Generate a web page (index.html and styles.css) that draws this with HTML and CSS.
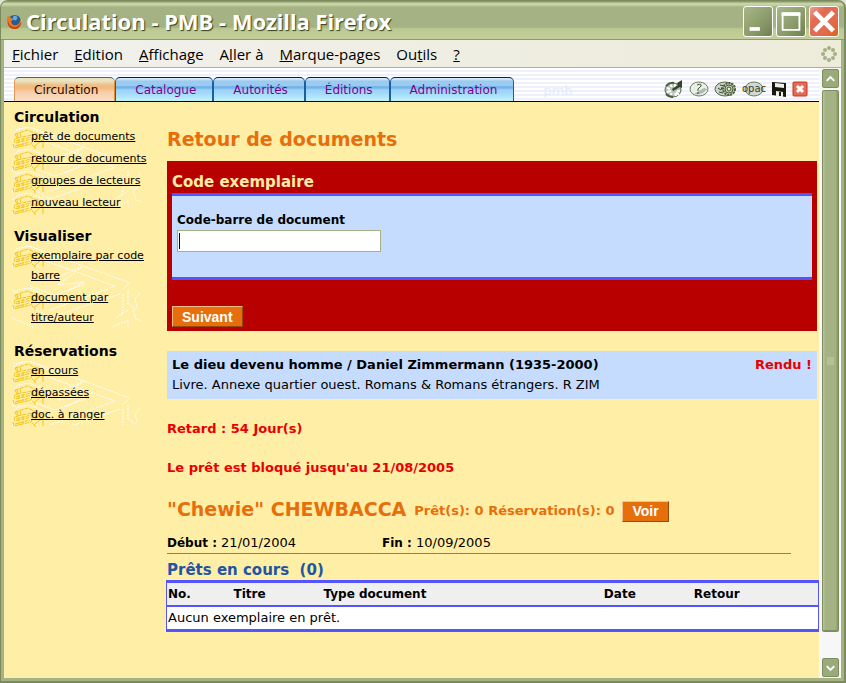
FILE: index.html
```html
<!DOCTYPE html>
<html lang="fr">
<head>
<meta charset="utf-8">
<title>Circulation - PMB</title>
<link rel="stylesheet" href="styles.css">
</head>
<body>
<svg class="defs" aria-hidden="true">
  <symbol id="books" viewBox="0 0 33 22">
    <g fill="none" stroke="#fff" stroke-dasharray="2 1"><path d="M2 6 6 2 17 0l13 5 2 4M1 12l-1 3M1 19l-1 3"/></g>
    <g fill="none" stroke="#f5c518" stroke-dasharray="4 1"><path d="M3 7 16 3l6 3M3 7l2 4 15-3M5 7l1 3M8 6l1 4M3 12l3-1M2 12l1 4 17-4 1-4M4 14l15-4M1 17l1 4 17-4 2-5M3 19l15-4M7 12v8M11 11v8"/></g>
    <g fill="none" stroke="#f5c518"><path d="M22 6l4 1-3 6M20 8l2 4M22 20l9-8v9M22 15l8-6 2 3M20 18l3 2v2"/></g>
  </symbol>
  <symbol id="sketch" viewBox="0 0 130 86">
    <g fill="none" stroke="#fff" stroke-dasharray="2 1"><path d="M4 3 17 0l101 37-8 7M31 14l72 26-65 24M31 7l12 5M43 32l27-11-24 18 26-3-18 10M18 40l25 9 30-11M0 44l6 3M38 72l70-24M0 72l22 9M21 62l17 10M116 44v14l6 4M128 47l-5 6 2 8-4 3 3 9 6 2M111 48v16l-2 6M101 81l15-7v7M116 64l-13 8"/></g>
  </symbol>
</svg>
<div class="window">
  <header class="titlebar">
    <svg class="fox" viewBox="0 0 18 18" aria-hidden="true"><circle cx="9" cy="9" r="7" fill="#245c9c"/><path d="M8 3q4-1 4 3l-2 2-3-1z" fill="#64b0dc"/><path d="M2 3C0 8 1 16 9 17c7 0 9-8 7-13 0 4-2 9-6 9-3 0-5-2-4-5l2-1C6 5 4 5 2 3z" fill="#ed791b"/><path d="M2 8c1 5 4 7 8 7 4-1 5-4 6-6 0 4-2 8-7 8-5 0-8-4-7-9z" fill="#c84112"/><path d="M15 4q2 4-1 8l3-4z" fill="#ffd14c"/></svg>
    <h1 class="window-title">Circulation - PMB - Mozilla Firefox</h1>
    <div class="window-buttons">
      <button class="wbtn" type="button" aria-label="Réduire"><svg viewBox="0 0 30 30"><path d="M6 21h11v4H6z" fill="#fff"/></svg></button>
      <button class="wbtn" type="button" aria-label="Agrandir"><svg viewBox="0 0 30 30"><path d="M6 7h18v17H6z" fill="none" stroke="#fff" stroke-width="2"/><path d="M5 7h20" stroke="#fff" stroke-width="4"/></svg></button>
      <button class="wbtn close" type="button" aria-label="Fermer"><svg viewBox="0 0 30 30"><path d="M5 5 25 25M25 5 5 25" stroke="#fff" stroke-width="5"/></svg></button>
    </div>
  </header>
  <nav class="menubar" aria-label="Menu">
    <a href="#"><u>F</u>ichier</a><a href="#"><u>E</u>dition</a><a href="#"><u>A</u>ffichage</a><a href="#">A<u>l</u>ler à</a><a href="#"><u>M</u>arque-pages</a><a href="#">Ou<u>t</u>ils</a><a href="#"><u>?</u></a>
    <svg class="throbber" viewBox="0 0 16 16" aria-hidden="true"><g fill="#a3b183"><circle cx="8" cy="2" r="2"/><circle cx="12" cy="4" r="2"/><circle cx="14" cy="8" r="2"/><circle cx="12" cy="12" r="2"/><circle cx="8" cy="14" r="2"/><circle cx="4" cy="12" r="2"/><circle cx="2" cy="8" r="2"/><circle cx="4" cy="4" r="2"/></g></svg>
  </nav>
  <div class="viewport">
    <div class="page">
      <div class="topbar">
        <nav class="tabs" aria-label="Modules">
          <a class="tab active" href="#">Circulation</a>
          <a class="tab" href="#">Catalogue</a>
          <a class="tab" href="#">Autorités</a>
          <a class="tab" href="#">Éditions</a>
          <a class="tab" href="#">Administration</a>
        </nav>
        <span class="watermark" aria-hidden="true">pmb</span>
        <div class="tools">
          <a href="#" aria-label="Tableau de bord"><svg width="20" height="18" viewBox="0 0 20 18"><ellipse cx="9" cy="10" rx="8" ry="7" fill="#b9c0b8" stroke="#5c6d49"/><path d="M3 8l3 1M6 4l2 3M3 12l4-1M6 16l2-3M11 13l1 3M16 11h-3M15 15l-3-3M11 4v3" stroke="#fff" stroke-width="2"/><path d="M2 6q4-4 8-3M2 14q3 3 7 3" fill="none" stroke="#4d5e37" stroke-width="2"/><path d="M18 0v8l-2-1-7 4-1-2 6-4-1-2z" fill="#33442a"/></svg></a>
          <a href="#" aria-label="Aide"><svg width="20" height="18" viewBox="0 0 20 18"><ellipse cx="10" cy="9" rx="9" ry="7" fill="#e9eee8" stroke="#6c7c59"/><path d="M5 14q8 2 13-5l-3-1-5 3z" fill="#adb9b3"/><path d="M8 5q5-2 4 1l-3 3v2M8 13h2" fill="none" stroke="#3d5433"/></svg></a>
          <a href="#" aria-label="Paramètres"><svg width="23" height="18" viewBox="0 0 23 18"><ellipse cx="11" cy="9" rx="10" ry="7" fill="#cbd3cb" stroke="#566743"/><path d="M4 8l3 2 1-3M6 5l4 1M5 12l4 1" fill="none" stroke="#38492b"/><circle cx="15" cy="9" r="6" fill="#bac6af" stroke="#4c5d37" stroke-width="2" stroke-dasharray="2 1"/><circle cx="15" cy="9" r="4" fill="#cdd7c2" stroke="#4c5d37"/><circle cx="15" cy="9" r="2" fill="#e9eee2" stroke="#384b29"/></svg></a>
          <a class="opac" href="#"><svg width="24" height="18" viewBox="0 0 24 18" aria-hidden="true"><ellipse cx="12" cy="9" rx="9" ry="7" fill="#d0d8d4" stroke="#6a7a57"/></svg><span>opac</span></a>
          <a href="#" aria-label="Sauvegarde"><svg width="16" height="16" viewBox="0 0 16 16"><path d="M1 1l14 1v14L1 14z" fill="#17190f"/><path d="M4 2l9 1v4L4 6zM5 10l7 1v5H5z" fill="#eef0e9"/><path d="M8 11h2v4H8z" fill="#17190f"/></svg></a>
          <a href="#" aria-label="Quitter"><svg width="16" height="16" viewBox="0 0 16 16"><rect x="1" y="1" width="14" height="14" rx="1" fill="#e46b55" stroke="#c6321c"/><path d="M5 5l6 6M11 5l-6 6" stroke="#fff" stroke-width="3"/></svg></a>
        </div>
      </div>
      <div class="columns">
        <aside class="sidebar">
          <section>
            <h2>Circulation</h2>
            <div class="links">
              <svg class="sketch" aria-hidden="true"><use href="#sketch" width="130" height="86"/></svg>
              <ul>
                <li><svg class="books" aria-hidden="true"><use href="#books"/></svg><a href="#">prêt de documents</a></li>
                <li><svg class="books" aria-hidden="true"><use href="#books"/></svg><a href="#">retour de documents</a></li>
                <li><svg class="books" aria-hidden="true"><use href="#books"/></svg><a href="#">groupes de lecteurs</a></li>
                <li><svg class="books" aria-hidden="true"><use href="#books"/></svg><a href="#">nouveau lecteur</a></li>
              </ul>
            </div>
          </section>
          <section>
            <h2>Visualiser</h2>
            <div class="links">
              <svg class="sketch" aria-hidden="true"><use href="#sketch" width="130" height="86"/></svg>
              <ul>
                <li><svg class="books" aria-hidden="true"><use href="#books"/></svg><a href="#">exemplaire par code barre</a></li>
                <li><svg class="books" aria-hidden="true"><use href="#books"/></svg><a href="#">document par titre/auteur</a></li>
              </ul>
            </div>
          </section>
          <section>
            <h2>Réservations</h2>
            <div class="links">
              <svg class="sketch" aria-hidden="true"><use href="#sketch" width="130" height="86"/></svg>
              <ul>
                <li><svg class="books" aria-hidden="true"><use href="#books"/></svg><a href="#">en cours</a></li>
                <li><svg class="books" aria-hidden="true"><use href="#books"/></svg><a href="#">dépassées</a></li>
                <li><svg class="books" aria-hidden="true"><use href="#books"/></svg><a href="#">doc. à ranger</a></li>
              </ul>
            </div>
          </section>
        </aside>
        <main class="content">
          <h2 class="title">Retour de documents</h2>
          <form class="scan">
            <h3>Code exemplaire</h3>
            <div class="scan-body">
              <label for="barcode">Code-barre de document</label>
              <div class="field"><input id="barcode" type="text"><span class="caret"></span></div>
            </div>
            <button class="btn" type="button">Suivant</button>
          </form>
          <section class="item">
            <div class="item-head"><b>Le dieu devenu homme / Daniel Zimmermann (1935-2000)</b><b class="alert">Rendu !</b></div>
            <div>Livre. Annexe quartier ouest. Romans &amp; Romans étrangers. R ZIM</div>
          </section>
          <p class="alert">Retard : 54 Jour(s)</p>
          <p class="alert">Le prêt est bloqué jusqu'au 21/08/2005</p>
          <div class="reader">
            <h2 class="title">"Chewie" CHEWBACCA</h2>
            <span class="counts">Prêt(s): 0 Réservation(s): 0</span>
            <button class="btn" type="button">Voir</button>
          </div>
          <div class="dates"><span><b>Début :</b> 21/01/2004</span><span><b>Fin :</b> 10/09/2005</span></div>
          <h3 class="loans-title">Prêts en cours &nbsp;(0)</h3>
          <table class="loans">
            <thead><tr><th class="no">No.</th><th class="name">Titre</th><th class="type">Type document</th><th class="name">Date</th><th>Retour</th></tr></thead>
            <tbody><tr><td colspan="5">Aucun exemplaire en prêt.</td></tr></tbody>
          </table>
        </main>
      </div>
    </div>
    <div class="scrollbar">
      <button class="arrow" type="button" aria-label="Défiler vers le haut"><svg viewBox="0 0 16 16"><path d="M4 10l4-4 4 4" fill="none" stroke="#fff" stroke-width="2"/></svg></button>
      <div class="thumb"><svg viewBox="0 0 8 8" width="8" height="8"><path d="M0 1h7M0 3h7M0 5h7M0 7h7" stroke="#c3cfa4"/></svg></div>
      <div class="track"></div>
      <button class="arrow" type="button" aria-label="Défiler vers le bas"><svg viewBox="0 0 16 16"><path d="M4 6l4 4 4-4" fill="none" stroke="#fff" stroke-width="2"/></svg></button>
    </div>
  </div>
</div>
</body>
</html>
```
FILE: styles.css
```css
* { box-sizing: border-box; }
body {
  margin: 0;
  background: #dfe2d0;
  color: #000;
  font: 13px/20px Verdana, "DejaVu Sans", sans-serif;
}
h1, h2, h3, p, ul { margin: 0; padding: 0; }
a { color: inherit; text-decoration: none; }
button { font: inherit; padding: 0; }
.defs { position: absolute; width: 0; height: 0; }

.window {
  display: flex;
  flex-direction: column;
  min-height: 100vh;
  background: #a5b384;
  border: solid #7b8b5e;
  border-width: 1px 2px 2px 1px;
  border-radius: 8px 8px 0 0;
  padding: 0 3px 3px;
}

/* Title bar */
.titlebar {
  display: flex;
  align-items: center;
  height: 39px;
  margin: 0 -3px;
  padding: 2px 5px 0;
  border-radius: 7px 7px 0 0;
  border-bottom: 1px solid #8c9b6c;
  background: linear-gradient(#8c9c6b 0 1px, #c8d3a4 2px 4px, #a5b384 6px 26px, #bdc993 28px, #c3cf97);
}
.fox { width: 17px; height: 17px; }
.window-title {
  flex: 1;
  margin-left: 3px;
  color: #fff;
  font: bold 22px/34px "Trebuchet MS", "Noto Sans", "Open Sans", sans-serif;
  text-shadow: 1px 1px 1px #33401c;
}
.window-buttons { display: flex; gap: 3px; }
.wbtn {
  width: 30px;
  height: 31px;
  border: 1px solid #fff;
  border-radius: 3px;
  background: linear-gradient(135deg, #a8b787, #8b9a69 60%, #707f51);
}
.wbtn.close { background: linear-gradient(135deg, #efa090, #e36b51 30% 65%, #dd6413); }
.wbtn svg { display: block; width: 28px; height: 29px; }

/* Menu bar */
.menubar {
  display: flex;
  align-items: center;
  gap: 16px;
  height: 28px;
  padding: 0 4px 0 8px;
  background: linear-gradient(to right, #f1f1ee, #edebd9);
  border-bottom: 1px solid #b0af9a;
  font: 15px/24px Tahoma, "Open Sans", "Noto Sans", sans-serif;
}
.throbber { width: 16px; height: 16px; margin-left: auto; }

.viewport { display: flex; flex: 1; }
.page { flex: 1; background: #ffeea6; }

/* Module tabs */
.topbar {
  display: flex;
  align-items: flex-end;
  height: 34px;
  padding: 0 11px 0 10px;
  border-bottom: 1px solid #000;
  background: repeating-linear-gradient(#fff 0 2px, #eef0fb 2px 4px);
}
.tabs { display: flex; }
.tab {
  height: 24px;
  padding: 2px 16px 0 19px;
  border: solid #1b5f9e;
  border-width: 1px 1px 0;
  border-top-color: #002060;
  border-radius: 5px 5px 0 0;
  background: linear-gradient(#d4ebff 0 1px, #9ccbf0 3px 8px, #76b5ea 8px 10px, #a1d5f7 12px 14px, #bdf4ff);
  color: #800090;
  font-size: 12px;
}
.tab.active {
  border-color: #336b77 #e18c29 #e18c29 #dd9b55;
  background: linear-gradient(#ece3c0 0 3px, #eebf8a 7px, #f5b878 10px, #f7ceaa 14px, #f9dfc5);
  color: #1c0c00;
}
.watermark {
  flex: 1;
  padding-left: 29px;
  color: #e4eafa;
}
.tools { display: flex; align-items: center; gap: 5px; height: 24px; }
.tools svg { display: block; }
.opac { position: relative; }
.opac span {
  position: absolute;
  inset: 0;
  color: #33432a;
  font-size: 10px;
  line-height: 18px;
  text-align: center;
}

.columns { display: flex; }

/* Side navigation */
.sidebar { flex: 0 0 154px; padding: 6px 0 0 8px; }
.sidebar section { margin-bottom: 14px; }
.sidebar h2 { padding-left: 2px; font-size: 14px; line-height: 19px; }
.links { position: relative; }
.sidebar ul { list-style: none; }
.sketch { position: absolute; left: 0; top: 0; width: 130px; height: 100%; overflow: hidden; }
.sidebar li { position: relative; padding-left: 19px; font-size: 11px; }
.sidebar li + li { margin-top: 2px; }
.books { position: absolute; left: 0; top: 0; width: 33px; height: 22px; }
.sidebar li a { position: relative; text-decoration: underline; }

/* Main column */
.content { flex: 1; padding: 23px 2px 12px 9px; }
.title { color: #e76f0b; font-size: 19px; line-height: 28px; }
.scan {
  margin-top: 8px;
  padding: 10px 5px 4px;
  background: #b90000;
}
.scan h3 { color: #ffeea6; font-size: 15px; line-height: 22px; }
.scan-body {
  margin-bottom: 26px;
  padding: 14px 5px 25px;
  border: solid #5555ff;
  border-width: 3px 0;
  background: #c5dcff;
}
.scan-body label { display: block; font-size: 12px; font-weight: bold; }
.field { position: relative; width: 204px; }
.field input {
  display: block;
  width: 100%;
  height: 22px;
  border: 1px solid #a5b384;
  background: #fff;
}
.caret { position: absolute; left: 2px; top: 3px; width: 1px; height: 16px; background: #000; }
.btn {
  height: 21px;
  padding: 0 9px;
  border: 1px solid;
  border-color: #f5be8a #98480b #98480b #f5be8a;
  background: #e76f0b;
  color: #fff;
  font: bold 14px/18px "Liberation Sans", Arial, sans-serif;
}
.scan .btn { display: block; }
.item { margin: 20px 0; padding: 4px 5px; background: #c5dcff; }
.item-head { display: flex; justify-content: space-between; }
.alert { color: #e80000; font-weight: bold; }
p.alert { margin-bottom: 19px; }
.reader { display: flex; align-items: center; gap: 8px; margin-top: -2px; }
.counts { padding-top: 4px; color: #e76f0b; font-weight: bold; }
.reader .btn { margin-top: 4px; }
.dates {
  display: flex;
  width: 96%;
  margin-top: 10px;
  border-bottom: 1px solid #7b8b5e;
}
.dates b { font-size: 12px; }
.dates span { flex: 0 0 215px; }
.loans-title { margin-top: 6px; color: #1f55a5; font-size: 15px; line-height: 20px; }

/* Loans */
.loans {
  width: calc(100% + 3px);
  margin: 0 -2px 0 -1px;
  border-collapse: collapse;
  table-layout: fixed;
  border: solid #5555ff;
  border-width: 3px 1px;
  background: #fff;
}
.loans th, .loans td { padding: 1px; text-align: left; }
.loans th {
  background: #efefef;
  border-bottom: 2px solid #5555ff;
  font-size: 12px;
}
.no { width: 66px; }
.name { width: 90px; }
.type { width: 43%; }

/* Scroll bar */
.scrollbar {
  display: flex;
  flex-direction: column;
  flex: 0 0 22px;
  padding: 1px 2px 1px 3px;
  background: #f7f7f7;
}
.arrow {
  flex: 0 0 19px;
  border: 1px solid #7f8e60;
  border-radius: 2px;
  background: #9aaa78;
}
.arrow svg { display: block; width: 15px; height: 16px; }
.thumb {
  display: flex;
  align-items: center;
  justify-content: center;
  flex: 542;
  margin-top: 2px;
  border: solid #7f8e60;
  border-width: 1px 1px 2px;
  border-radius: 2px;
  background: linear-gradient(to right, #b5c293 0 1px, #a5b384 2px 13px, #8b9a69 14px);
}
.track { flex: 26; }
```
